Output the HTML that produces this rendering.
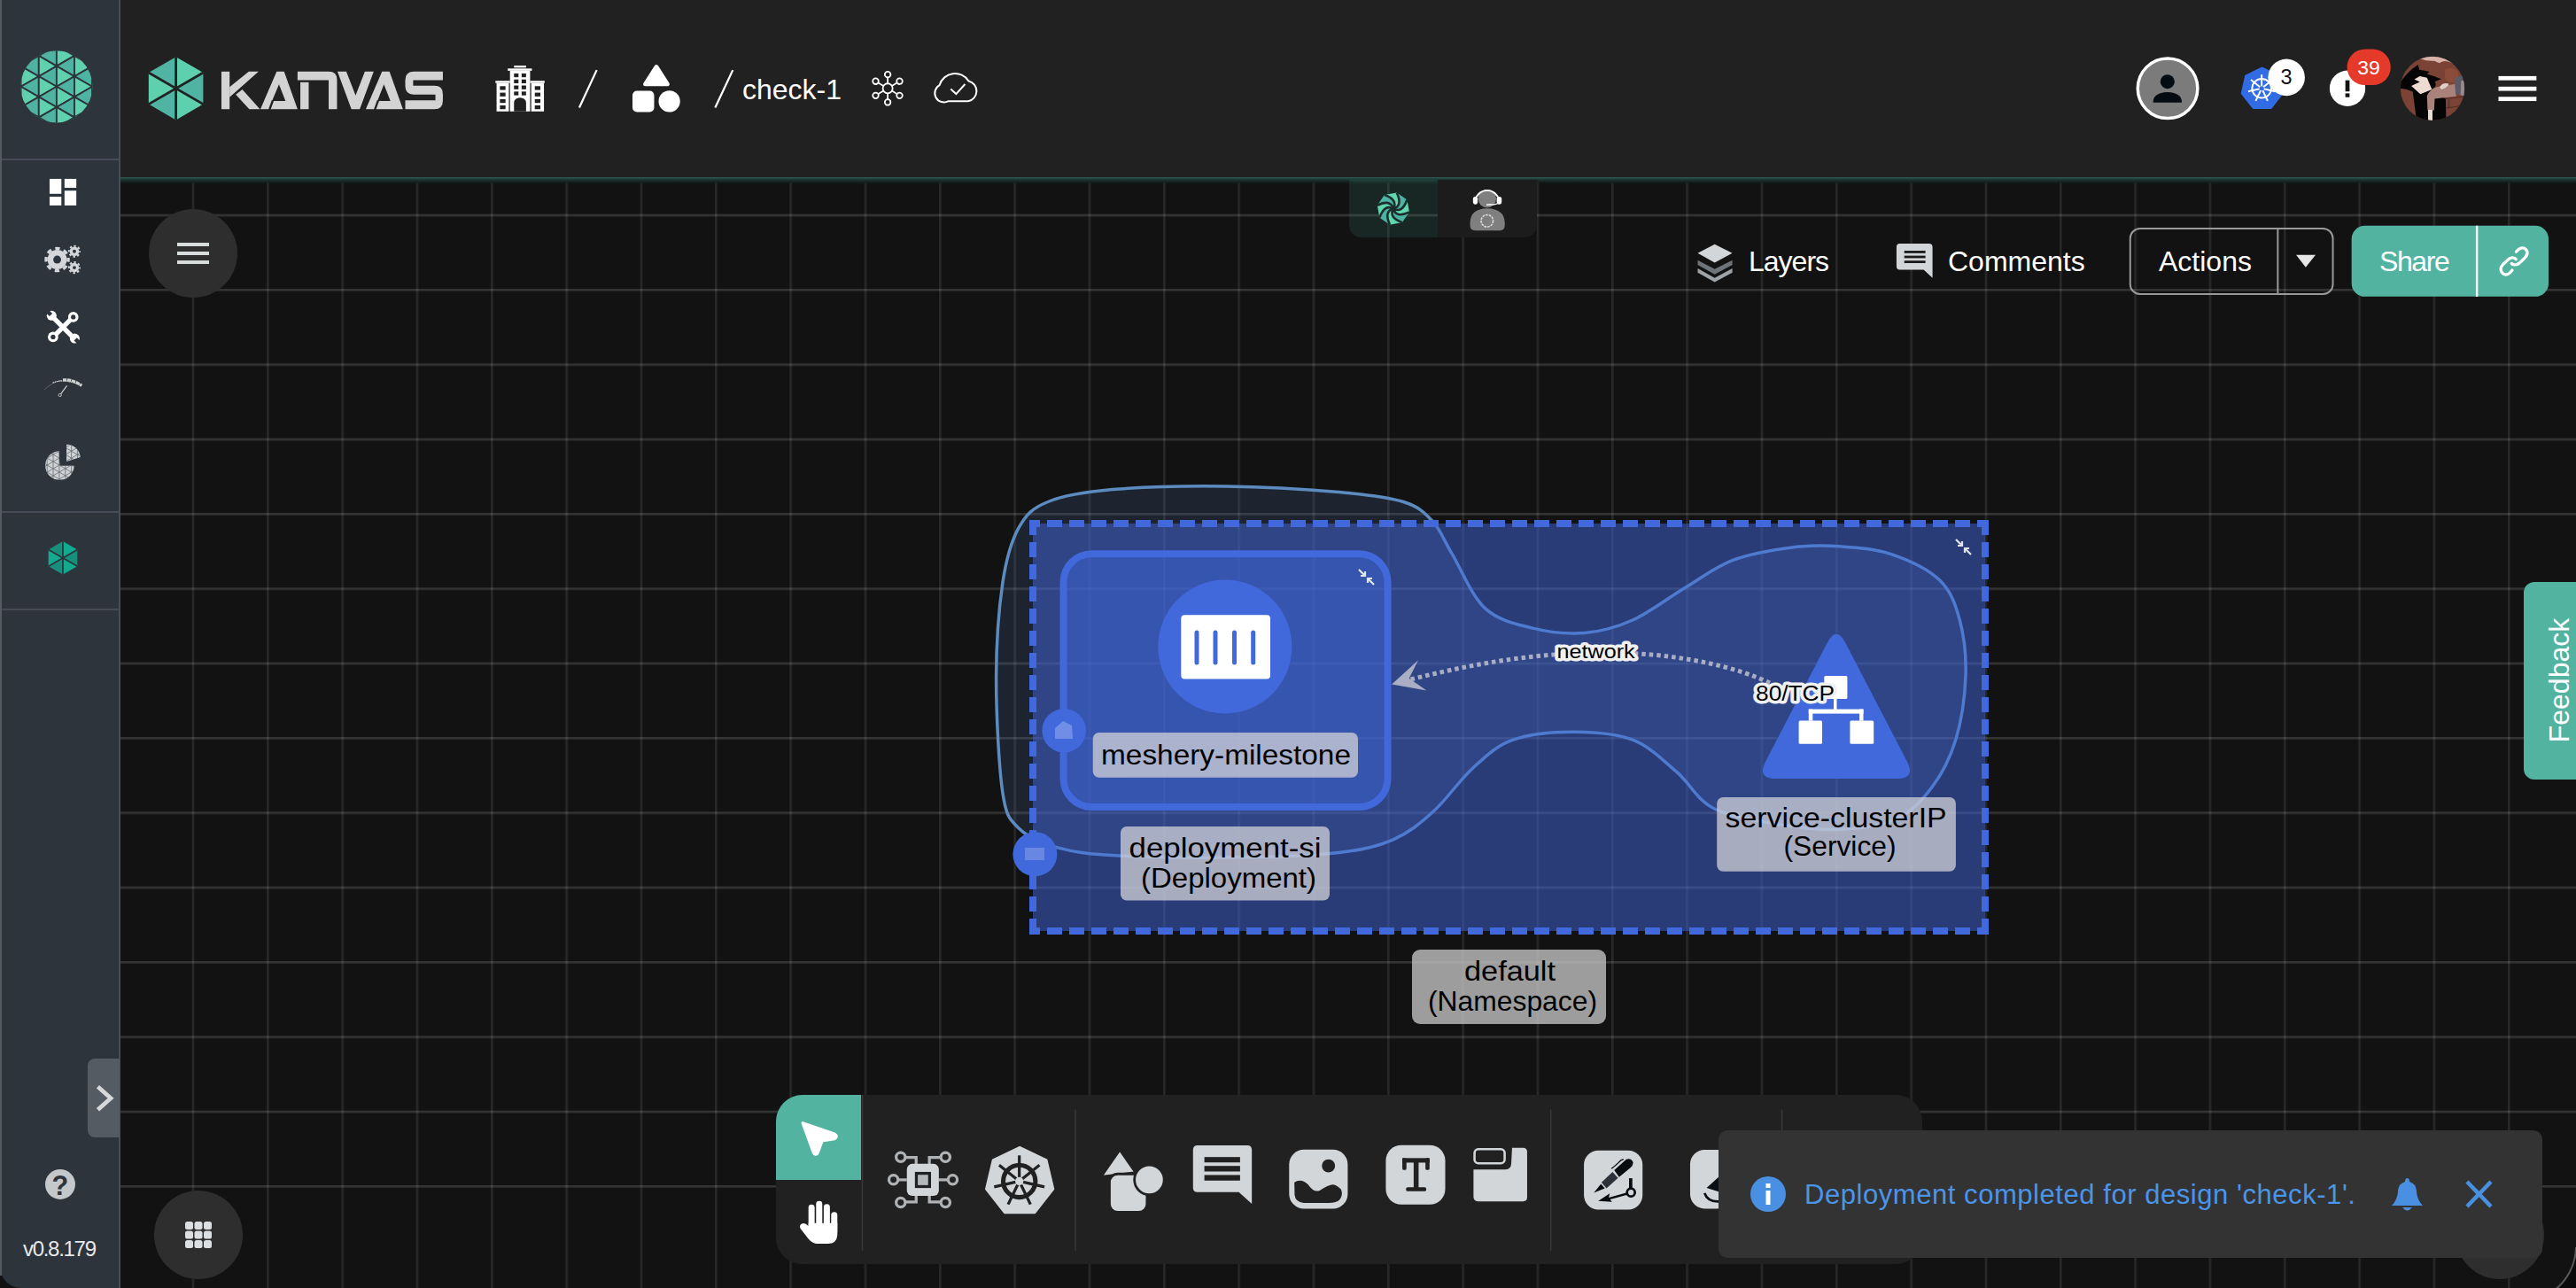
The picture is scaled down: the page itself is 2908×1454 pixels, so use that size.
<!DOCTYPE html>
<html><head><meta charset="utf-8">
<style>
html,body{margin:0;padding:0;}
body{width:2908px;height:1454px;overflow:hidden;background:#121212;position:relative;font-family:"Liberation Sans",sans-serif;}
.abs{position:absolute;}
svg{position:absolute;overflow:visible;}
.txt{position:absolute;white-space:nowrap;line-height:1;}
</style></head><body>
<!-- grid -->
<svg style="left:0;top:0" width="2908" height="1454" viewBox="0 0 2908 1454">
  <defs>
    <pattern id="gpv" patternUnits="userSpaceOnUse" x="216.7" y="0" width="84.33" height="1454">
      <rect x="0" y="0" width="2.6" height="1454" fill="rgba(255,255,255,0.095)"/>
    </pattern>
    <pattern id="gph" patternUnits="userSpaceOnUse" x="0" y="241.7" width="2908" height="84.33">
      <rect x="0" y="0" width="2908" height="2.6" fill="rgba(255,255,255,0.14)"/>
    </pattern>
  </defs>
  <rect x="135" y="200" width="2773" height="1254" fill="url(#gpv)"/>
  <rect x="135" y="200" width="2773" height="1200" fill="url(#gph)"/>
  <path d="M2908,1408 A62,62 0 0 1 2846,1470 L2908,1470 Z" fill="#0a0a0a"/>
  <path d="M2908,1408 A62,62 0 0 1 2880,1459" fill="none" stroke="#5a5a5a" stroke-width="2"/>
</svg>

<svg style="left:0;top:0" width="2908" height="1454" viewBox="0 0 2908 1454">
<path d="M1124.6,767.0 C1124.6,727.5 1127.7,686.2 1131.9,657.7 C1136.2,629.2 1141.6,610.9 1150.1,595.7 C1158.6,580.5 1165.3,573.7 1183.0,566.5 C1200.7,559.3 1222.5,555.5 1256.0,552.6 C1289.5,549.7 1341.1,548.5 1383.7,549.0 C1426.3,549.5 1478.0,552.6 1511.4,555.5 C1544.8,558.4 1566.7,561.0 1584.3,566.5 C1601.9,572.0 1608.1,578.7 1617.2,588.4 C1626.3,598.1 1629.1,608.5 1639.0,624.9 C1648.9,641.3 1661.2,672.6 1676.4,686.6 C1691.6,700.6 1711.6,704.5 1730.4,709.1 C1749.2,713.8 1770.2,716.0 1789.0,714.5 C1807.8,713.0 1824.2,708.4 1843.0,700.0 C1861.8,691.6 1882.7,675.2 1901.5,664.0 C1920.3,652.8 1935.3,640.3 1955.6,632.6 C1975.8,624.9 2002.8,620.6 2023.0,618.0 C2043.2,615.4 2058.2,615.5 2077.0,616.8 C2095.8,618.1 2116.9,619.4 2135.7,625.8 C2154.5,632.2 2176.9,642.6 2189.7,655.0 C2202.5,667.4 2207.4,682.0 2212.3,700.0 C2217.2,718.0 2219.8,740.5 2219.0,763.0 C2218.2,785.5 2214.2,814.0 2207.8,835.0 C2201.4,856.0 2192.1,874.0 2180.7,889.0 C2169.3,904.0 2157.4,917.1 2139.6,925.0 C2121.8,932.9 2097.3,935.7 2074.0,936.4 C2050.7,937.1 2023.4,933.5 1999.9,929.4 C1976.4,925.3 1950.9,921.5 1933.0,911.8 C1915.1,902.1 1907.5,884.0 1892.5,871.2 C1877.5,858.4 1862.5,842.7 1843.0,835.2 C1823.5,827.7 1798.0,826.2 1775.5,826.2 C1753.0,826.2 1726.8,828.5 1708.0,835.2 C1689.2,842.0 1678.0,853.2 1663.0,866.7 C1648.0,880.2 1632.9,902.8 1617.9,916.3 C1602.9,929.8 1590.5,940.1 1572.8,947.8 C1555.0,955.5 1539.9,959.1 1511.4,962.4 C1482.9,965.7 1443.3,967.2 1401.9,967.8 C1360.5,968.4 1297.9,967.8 1263.2,966.0 C1228.5,964.2 1212.8,962.1 1193.9,956.9 C1175.1,951.7 1160.4,945.3 1150.1,935.0 C1139.8,924.7 1136.2,922.9 1131.9,894.9 C1127.7,866.9 1124.6,806.5 1124.6,767.0Z" fill="rgba(90,123,185,0.18)" stroke="#5b8bbf" stroke-width="3.5"/>
<rect x="1166" y="591" width="1075" height="460" fill="rgba(65,105,225,0.49)"/>
<g stroke="#4169dc" stroke-width="8" fill="none">
  <line x1="1162" y1="591" x2="2245" y2="591" stroke-dasharray="17 8" stroke-dashoffset="5"/>
  <line x1="1162" y1="1051" x2="2245" y2="1051" stroke-dasharray="17 8" stroke-dashoffset="5"/>
  <line x1="1166" y1="587" x2="1166" y2="1055" stroke-dasharray="17 8" stroke-dashoffset="0"/>
  <line x1="2241" y1="587" x2="2241" y2="1055" stroke-dasharray="17 8" stroke-dashoffset="0"/>
</g>
<rect x="1200.5" y="625.2" width="366" height="285.8" rx="32" fill="rgba(65,105,225,0.45)" stroke="#4169dc" stroke-width="8"/>
<circle cx="1382.9" cy="730" r="75.5" fill="#4169dc"/>
<rect x="1333.3" y="694.2" width="100.7" height="72.2" rx="4" fill="#fff"/>
<g stroke="#4169dc" stroke-width="5" stroke-linecap="round">
  <line x1="1351" y1="714" x2="1351" y2="748"/><line x1="1372" y1="714" x2="1372" y2="748"/>
  <line x1="1393.5" y1="714" x2="1393.5" y2="748"/><line x1="1414.7" y1="714" x2="1414.7" y2="748"/>
</g>
<g stroke="#fff" stroke-width="2.2" fill="none" opacity="0.85">
  <path d="M1534,643 L1541,650 M1536,650 H1541 V645"/>
  <path d="M1551,660 L1544,653 M1549,653 H1544 V658"/>
  <path d="M2208,609 L2215,616 M2210,616 H2215 V611"/>
  <path d="M2225,626 L2218,619 M2223,619 H2218 V624"/>
</g>
<circle cx="1201.2" cy="824.8" r="24.8" fill="#4169dc"/>
<path d="M1191,834 V822 L1200,814 L1210,819 L1211,834 Z" fill="rgba(255,255,255,0.25)"/>
<circle cx="1168.4" cy="964.2" r="25" fill="#4169dc"/>
<rect x="1157" y="957" width="22" height="14" fill="rgba(255,255,255,0.2)"/>
<path d="M2083.2,725.5 Q2073.0,706.0 2062.8,725.5 L1993.2,859.5 Q1983.0,879.0 2005.0,879.0 L2141.0,879.0 Q2163.0,879.0 2152.8,859.5 Z" fill="#4169dc"/>
<g fill="#fff">
  <rect x="2059.3" y="762.9" width="26.1" height="26.1" rx="1.5"/>
  <rect x="2030.6" y="813.4" width="26.4" height="26.4" rx="1.5"/>
  <rect x="2088.4" y="813.4" width="26.8" height="26.4" rx="1.5"/>
  <rect x="2070" y="789" width="3.5" height="12"/>
  <rect x="2041.8" y="800.6" width="61.7" height="5"/>
  <rect x="2041.8" y="800.6" width="4.5" height="13"/>
  <rect x="2099" y="800.6" width="4.5" height="13"/>
</g>
<path d="M1592.5,767 C1680,745 1760,733 1850,738 C1900,741 1960,752 2000,772" fill="none" stroke="#a9aec5" stroke-width="5" stroke-dasharray="4.5 4"/>
<polygon points="1571.1,772.6 1601,745.3 1590.7,765.8 1610.4,779.4" fill="#a9aec5"/>
<g fill="rgba(210,210,215,0.75)">
  <rect x="1233.7" y="827" width="299.3" height="50.8" rx="7"/>
  <rect x="1265" y="933" width="236" height="83.6" rx="7"/>
  <rect x="1938.2" y="899.9" width="269.7" height="83.8" rx="7"/>
</g>
<rect x="1594" y="1072" width="219" height="84" rx="9" fill="rgba(195,195,195,0.79)"/>
</svg>
<svg style="left:0;top:0" width="2908" height="1454" viewBox="0 0 2908 1454" font-family="Liberation Sans" fill="#000">
  <text x="1384" y="863" font-size="32" text-anchor="middle" textLength="282" lengthAdjust="spacingAndGlyphs">meshery-milestone</text>
  <text x="1383" y="968" font-size="32" text-anchor="middle" textLength="217" lengthAdjust="spacingAndGlyphs">deployment-si</text>
  <text x="1387" y="1002" font-size="32" text-anchor="middle" textLength="198" lengthAdjust="spacingAndGlyphs">(Deployment)</text>
  <text x="2072.6" y="934" font-size="32" text-anchor="middle" textLength="250" lengthAdjust="spacingAndGlyphs">service-clusterIP</text>
  <text x="2077" y="965.5" font-size="32" text-anchor="middle" textLength="127" lengthAdjust="spacingAndGlyphs">(Service)</text>
  <text x="1704.5" y="1107" font-size="32" text-anchor="middle" textLength="103" lengthAdjust="spacingAndGlyphs">default</text>
  <text x="1707.5" y="1141" font-size="32" text-anchor="middle" textLength="191" lengthAdjust="spacingAndGlyphs">(Namespace)</text>
  <g stroke="#f0f0f0" stroke-width="7" stroke-linejoin="round" paint-order="stroke">
    <text x="1801.6" y="742.7" font-size="22" text-anchor="middle" textLength="88" lengthAdjust="spacingAndGlyphs">network</text>
    <text x="2026.6" y="791.3" font-size="23" text-anchor="middle" textLength="89" lengthAdjust="spacingAndGlyphs">80/TCP</text>
  </g>
</svg>

<!-- bottom toolbar -->
<div class="abs" style="left:876px;top:1236px;width:1294px;height:191px;background:#212121;border-radius:30px;"></div>
<div class="abs" style="left:876px;top:1236px;width:96px;height:96px;background:#52b3a1;border-radius:30px 0 0 0;"></div>
<svg style="left:860px;top:1220px" width="600" height="220" viewBox="0 0 2576 944.6">
  <path d="M198,205 L352,258 Q372,268 352,282 L292,292 L272,348 Q262,368 250,348 Z" fill="#fff" stroke="#fff" stroke-width="14" stroke-linejoin="round"/>
  <g fill="#fff">
    <rect x="226" y="600" width="30" height="130" rx="15"/>
    <rect x="263" y="583" width="30" height="140" rx="15"/>
    <rect x="300" y="598" width="30" height="130" rx="15"/>
    <rect x="336" y="636" width="30" height="110" rx="15"/>
    <path d="M226,690 H366 V750 Q362,790 320,790 H270 Q245,790 225,765 L188,718 Q178,700 196,692 Q212,688 226,705 Z"/>
  </g>
  <rect x="484" y="68" width="6" height="757" fill="#3a3a3a"/>
  <rect x="1517" y="140" width="6" height="685" fill="#3a3a3a"/>
  <g fill="none" stroke="#b0b3b6" stroke-width="14">
    <circle cx="673" cy="370" r="22"/><circle cx="890" cy="370" r="22"/>
    <circle cx="638" cy="480" r="22"/><circle cx="925" cy="480" r="22"/>
    <circle cx="673" cy="590" r="22"/><circle cx="890" cy="590" r="22"/>
    <path d="M748,405 V372 H695 M812,405 V372 H868 M703,480 H660 M857,480 H903 M748,555 V588 H695 M812,555 V588 H868"/>
  </g>
  <rect x="703" y="403" width="155" height="155" rx="26" fill="#d3d6d9"/>
  <rect x="742" y="442" width="78" height="78" fill="#212121"/>
  <rect x="756" y="456" width="50" height="50" fill="#b5b8bb"/>
  <polygon points="1250,322 1380,385 1413,525 1323,640 1177,640 1087,525 1120,385" fill="#d3d6d9" stroke="#d3d6d9" stroke-width="10" stroke-linejoin="round"/>
  <g stroke="#212121" fill="none">
    <circle cx="1248" cy="487" r="78" stroke-width="22"/>
    <g stroke-width="14"><line x1="1248" y1="487" x2="1248.0" y2="362.0"/><line x1="1248" y1="487" x2="1345.7" y2="409.1"/><line x1="1248" y1="487" x2="1369.9" y2="514.8"/><line x1="1248" y1="487" x2="1302.2" y2="599.6"/><line x1="1248" y1="487" x2="1193.8" y2="599.6"/><line x1="1248" y1="487" x2="1126.1" y2="514.8"/><line x1="1248" y1="487" x2="1150.3" y2="409.1"/></g>
  </g>
  <circle cx="1248" cy="487" r="20" fill="#d3d6d9"/>
  <g fill="#d3d6d9" stroke="#212121" stroke-width="12" stroke-linejoin="round">
    <polygon points="1735,335 1812,445 1645,465"/>
    <rect x="1685" y="452" width="182" height="185" rx="40"/>
    <circle cx="1878" cy="480" r="72"/>
  </g>
  <path d="M2112,313 H2353 Q2375,313 2375,335 V597 L2312,540 H2112 Q2090,540 2090,518 V335 Q2090,313 2112,313 Z" fill="#d3d6d9"/>
  <g fill="#212121">
    <rect x="2145" y="370" width="173" height="26"/>
    <rect x="2145" y="413" width="173" height="27"/>
    <rect x="2145" y="457" width="173" height="27"/>
  </g>
</svg>
<svg style="left:1420px;top:1220px" width="600" height="220" viewBox="0 0 2576 944.6">
  <rect x="620" y="312" width="288" height="288" rx="75" fill="#d3d6d9"/>
  <g fill="#212121">
    <rect x="700" y="375" width="132" height="22"/>
    <rect x="700" y="375" width="20" height="58" rx="8"/>
    <rect x="812" y="375" width="20" height="58" rx="8"/>
    <rect x="755" y="390" width="24" height="140"/>
    <rect x="718" y="516" width="98" height="20" rx="8"/>
  </g>
  <path d="M1232,325 H1285 Q1305,325 1305,345 V565 Q1305,585 1285,585 H1067 Q1045,585 1045,563 V430 H1200 Q1228,430 1228,400 Z" fill="#d3d6d9"/>
  <rect x="1050" y="332" width="146" height="68" rx="18" fill="none" stroke="#d3d6d9" stroke-width="11"/>
  <rect x="1417" y="140" width="6" height="685" fill="#3a3a3a"/>
  <rect x="2537" y="140" width="6" height="685" fill="#3a3a3a"/>
  <rect x="2095" y="335" width="200" height="285" rx="70" fill="#d3d6d9"/>
  <path d="M2165,545 Q2180,590 2240,585" fill="none" stroke="#0a0f14" stroke-width="12"/>
  <path d="M2175,520 L2240,460 V540 Z" fill="#0a0f14"/>
</svg>
<svg style="left:1450px;top:1290px" width="80" height="80" viewBox="0 0 1288 1288">
  <rect x="85" y="125" width="1065" height="1075" rx="270" fill="#d3d6d9"/>
  <circle cx="800" cy="420" r="120" fill="#212121"/>
  <path d="M180,720 Q300,640 430,760 Q530,910 640,870 Q800,760 880,760 Q960,770 1030,850 Q1070,950 1000,1040 Q950,1095 800,1095 H350 Q200,1080 185,950 Z" fill="#212121"/>
</svg>
<svg style="left:1780px;top:1290px" width="80" height="80" viewBox="0 0 1288 1288">
  <rect x="130" y="140" width="1065" height="1075" rx="260" fill="#d3d6d9"/>
  <path d="M310,910 L440,750 L510,830 Z" fill="#060b10"/>
  <path d="M450,720 L650,530 L750,640 L540,830 Z" fill="#2b3138"/>
  <path d="M680,500 L900,300 Q990,270 1025,360 Q1020,420 980,450 L770,625 Z" fill="#060b10"/>
  <path d="M630,470 Q700,420 760,360 Q800,310 850,300" fill="none" stroke="#060b10" stroke-width="22"/>
  <rect x="950" y="645" width="60" height="190" fill="#060b10"/>
  <circle cx="985" cy="905" r="72" fill="none" stroke="#060b10" stroke-width="44"/>
  <path d="M915,925 L570,1020" stroke="#060b10" stroke-width="40"/>
  <path d="M390,1060 L600,920 L580,1000 L640,1075 Z" fill="#060b10"/>
</svg>
<!-- bottom-right round button -->
<div class="abs" style="left:2772px;top:1344px;width:100px;height:100px;border-radius:50%;background:#2e2e2e;"></div>
<!-- toast -->
<div class="abs" style="left:1940px;top:1276px;width:930px;height:144px;background:#333333;border-radius:10px;"></div>
<svg style="left:1940px;top:1276px" width="968" height="178" viewBox="0 0 968 178">
  <circle cx="56" cy="72" r="20" fill="#4a90e2"/>
  <rect x="53.5" y="68" width="5" height="16" fill="#fff"/>
  <rect x="53.5" y="60" width="5" height="5" fill="#fff"/>
  <path d="M760,85 H795 Q789,79 788,70 V68 Q787,60 780,58 Q780,54 777.5,54 Q775,54 775,58 Q768,60 767,68 V70 Q766,79 760,85 Z" fill="#4a90e2"/>
  <path d="M772,87 Q777.5,94 783,87 Z" fill="#4a90e2"/>
  <g stroke="#4a90e2" stroke-width="4.5">
    <line x1="845" y1="58" x2="872" y2="86"/>
    <line x1="872" y1="58" x2="845" y2="86"/>
  </g>
</svg>
<div class="txt" style="left:2037px;top:1333px;font-size:31px;color:#4b95e8;letter-spacing:0.55px;">Deployment completed for design 'check-1'.</div>

<!-- header -->
<div class="abs" style="left:135px;top:0;width:2773px;height:200px;background:#212121;"></div>
<div class="abs" style="left:136px;top:200px;width:2772px;height:8px;background:linear-gradient(#2d5c53 0%,#1f3a35 30%,#14201e 65%,rgba(18,18,18,0) 100%);"></div>

<!-- kanvas hexagon -->
<svg style="left:0;top:0" width="300" height="200" viewBox="0 0 300 200"><polygon points="198.6,99.8 198.6,64.2 229.4,82.0" fill="#5fd0ad"/><polygon points="198.6,99.8 229.4,82.0 229.4,117.6" fill="#4fb5a2"/><polygon points="198.6,99.8 229.4,117.6 198.6,135.4" fill="#5fd0ad"/><polygon points="198.6,99.8 198.6,135.4 167.8,117.6" fill="#4fb5a2"/><polygon points="198.6,99.8 167.8,117.6 167.8,82.0" fill="#5fd0ad"/><polygon points="198.6,99.8 167.8,82.0 198.6,64.2" fill="#4fb5a2"/><g stroke="#212121" stroke-width="2.8"><line x1="198.6" y1="64.2" x2="198.6" y2="135.4"/><line x1="229.4" y1="82.0" x2="167.8" y2="117.6"/><line x1="229.4" y1="117.6" x2="167.8" y2="82.0"/></g></svg>
<!-- KANVAS letters -->
<svg style="left:240px;top:70px" width="270" height="65" viewBox="0 0 2576 620">
  <g fill="#d3d3d3">
    <rect x="95" y="103" width="88" height="405"/>
    <polygon points="183,270 390,103 495,103 183,380"/>
    <polygon points="250,350 320,295 510,508 395,508"/>
    <polygon points="515,508 690,103 770,103 915,508"/>
    <path d="M915,103 H1250 Q1340,103 1340,190 V508 H1250 V195 H915 Z"/>
    <rect x="945" y="218" width="90" height="290"/>
    <polygon points="1345,103 1440,103 1540,360 1640,103 1735,103 1585,508 1495,508"/>
    <polygon points="1650,508 1825,103 1905,103 2050,508"/>
    <path d="M2170,103 H2480 V195 H2160 V255 H2390 Q2480,255 2480,345 V415 Q2480,508 2390,508 H2075 V413 H2400 V350 H2165 Q2075,350 2075,260 V195 Q2075,103 2170,103 Z"/>
  </g>
  <g fill="#212121">
    <polygon points="715,240 785,420 640,420"/>
    <polygon points="1845,240 1915,420 1775,420"/>
  </g>
  <g stroke="#212121" stroke-width="22">
    <line x1="648" y1="415" x2="612" y2="515"/>
    <line x1="1783" y1="415" x2="1747" y2="515"/>
  </g>
</svg>
<!-- breadcrumb icons -->
<svg style="left:500px;top:40px" width="650" height="120" viewBox="0 0 2576 475.6">
  <g fill="#fff">
    <rect x="318" y="135" width="54" height="9"/>
    <rect x="290" y="148" width="108" height="10"/>
    <rect x="300" y="158" width="90" height="182"/>
    <rect x="235" y="203" width="65" height="10"/>
    <rect x="240" y="213" width="55" height="127"/>
    <rect x="390" y="203" width="65" height="10"/>
    <rect x="395" y="213" width="57" height="127"/>
  </g>
  <g fill="#212121">
    <rect x="318" y="170" width="20" height="17"/><rect x="352" y="170" width="20" height="17"/>
    <rect x="318" y="197" width="20" height="17"/><rect x="352" y="197" width="20" height="17"/>
    <rect x="318" y="224" width="20" height="17"/><rect x="352" y="224" width="20" height="17"/>
    <rect x="318" y="251" width="20" height="17"/><rect x="352" y="251" width="20" height="17"/>
    <path d="M318,340 V300 A27,22 0 0 1 372,300 V340 Z"/>
    <rect x="255" y="227" width="25" height="17"/><rect x="255" y="256" width="25" height="17"/>
    <rect x="255" y="285" width="25" height="17"/><rect x="255" y="313" width="25" height="17"/>
    <rect x="411" y="227" width="25" height="17"/><rect x="411" y="256" width="25" height="17"/>
    <rect x="411" y="285" width="25" height="17"/><rect x="411" y="313" width="25" height="17"/>
  </g>
  <g stroke="#fff" stroke-width="9">
    <line x1="610" y1="323" x2="688" y2="155"/>
    <line x1="1218" y1="323" x2="1297" y2="155"/>
  </g>
  <g fill="#fff">
    <polygon points="955,140 1005,218 905,218" stroke="#fff" stroke-width="18" stroke-linejoin="round"/>
    <rect x="848" y="248" width="97" height="95" rx="20"/>
    <circle cx="1013" cy="295" r="48"/>
  </g>
  <g stroke="#fff" stroke-width="7" fill="none">
    <circle cx="1990" cy="237" r="22"/>
    <circle cx="1990" cy="175" r="13"/>
    <circle cx="1990" cy="299" r="13"/>
    <circle cx="2043" cy="205" r="13"/>
    <circle cx="2043" cy="269" r="13"/>
    <circle cx="1936" cy="205" r="13"/>
    <circle cx="1936" cy="269" r="13"/>
    <line x1="1990" y1="188" x2="1990" y2="215"/>
    <line x1="1990" y1="259" x2="1990" y2="286"/>
    <line x1="2031" y1="212" x2="2009" y2="226"/>
    <line x1="2031" y1="262" x2="2009" y2="248"/>
    <line x1="1948" y1="212" x2="1971" y2="226"/>
    <line x1="1948" y1="262" x2="1971" y2="248"/>
    <path d="M2262,294 H2350 A46,46 0 0 0 2352,204 A72,72 0 0 0 2222,222 A38,38 0 0 0 2262,294 Z" stroke-width="8"/>
    <path d="M2272,240 L2296,262 L2336,218" stroke-width="8"/>
  </g>
</svg>
<svg style="left:2705px;top:60px" width="85" height="80" viewBox="0 0 1369 1288">
  <defs><clipPath id="avc"><circle cx="660" cy="643" r="582"/></clipPath></defs>
  <g clip-path="url(#avc)">
    <rect x="0" y="0" width="1369" height="1288" fill="#7a4335"/>
    <path d="M880,300 Q1000,230 1120,330 Q1150,450 1080,520 Q950,560 890,450 Z" fill="#8c4c3c"/>
    <path d="M440,60 H1250 V420 Q1180,300 1100,230 Q1000,150 850,170 Q780,200 700,140 Q560,150 440,100 Z" fill="#d9b3aa"/>
    <path d="M800,170 Q880,120 1000,170 Q1060,200 1020,215 Q900,200 820,215 Z" fill="#7a4335"/>
    <path d="M60,560 Q200,330 400,210 L420,300 Q520,310 610,340 L560,380 Q700,420 820,470 L700,520 Q760,600 640,660 Q700,750 900,830 L910,1300 H380 Q330,900 300,700 Q180,640 60,640 Z" fill="#060505"/>
    <path d="M330,475 L430,420 L560,445 L650,660 L440,745 L275,595 L430,525 Z" fill="#ecdcd2"/>
    <path d="M560,770 Q620,640 760,610 L1080,560 L1090,790 Q900,800 700,830 L690,1040 H570 Z" fill="#a9837b"/>
    <path d="M790,620 Q850,520 960,560 Q920,640 820,660 Z" fill="#e0d0c8"/>
    <rect x="580" y="1030" width="80" height="220" fill="#ecdcd2"/>
    <path d="M1060,480 Q1120,400 1230,420 L1250,780 Q1150,760 1080,740 Z" fill="#595a66"/>
    <path d="M1180,500 L1250,500 L1250,780 L1170,760 Z" fill="#9a8a90"/>
    <g stroke="#4a2a22" stroke-width="14" fill="none">
      <path d="M900,830 Q1050,800 1240,790"/>
      <path d="M960,840 V1000"/>
      <path d="M900,1000 Q1050,980 1220,950"/>
    </g>
  </g>
</svg>
<div class="txt" style="left:838px;top:85px;font-size:32px;color:#fff;">check-1</div>
<!-- right header -->
<svg style="left:2350px;top:30px" width="558" height="150" viewBox="0 0 2576 692.4">
  <circle cx="448" cy="322" r="156" fill="#7b7b7b" stroke="#fff" stroke-width="16"/>
  <circle cx="447" cy="287" r="37" fill="#040c12"/>
  <path d="M372,396 Q372,345 447,342 Q522,345 522,396 Z" fill="#040c12"/>
  <polygon points="940,218 1023,258 1043,348 986,422 895,422 837,348 857,258" fill="#326ce5" stroke="#326ce5" stroke-width="14" stroke-linejoin="round"/>
  <g stroke="#fff" stroke-width="9" fill="none">
    <circle cx="938" cy="322" r="50"/><line x1="938" y1="322" x2="938.0" y2="250.0"/><line x1="938" y1="322" x2="994.3" y2="277.1"/><line x1="938" y1="322" x2="1008.2" y2="338.0"/><line x1="938" y1="322" x2="969.2" y2="386.9"/><line x1="938" y1="322" x2="906.8" y2="386.9"/><line x1="938" y1="322" x2="867.8" y2="338.0"/><line x1="938" y1="322" x2="881.7" y2="277.1"/></g>
  <circle cx="938" cy="322" r="12" fill="#326ce5"/>
  <circle cx="1067" cy="265" r="96" fill="#fff"/>
  <text x="1067" y="302" font-family="Liberation Sans" font-size="108" text-anchor="middle" fill="#111">3</text>
  <circle cx="1385" cy="322" r="93" fill="#fff"/>
  <rect x="1374" y="280" width="22" height="58" fill="#111"/>
  <rect x="1374" y="348" width="22" height="20" fill="#111"/>
  <rect x="1383" y="118" width="227" height="187" rx="93" fill="#e5392a"/>
  <text x="1496" y="250" font-family="Liberation Sans" font-size="106" text-anchor="middle" fill="#fff">39</text>
  <g fill="#fff">
    <rect x="2172" y="258" width="198" height="22"/>
    <rect x="2172" y="313" width="198" height="22"/>
    <rect x="2172" y="366" width="198" height="22"/>
  </g>
</svg>

<!-- menu round button -->
<div class="abs" style="left:168px;top:236px;width:100px;height:100px;border-radius:50%;background:#2e2e2e;"></div>
<div class="abs" style="left:200px;top:274px;width:36px;height:3.5px;background:#d8dcdc;"></div>
<div class="abs" style="left:200px;top:284px;width:36px;height:3.5px;background:#d8dcdc;"></div>
<div class="abs" style="left:200px;top:294px;width:36px;height:3.5px;background:#d8dcdc;"></div>
<!-- apps round button -->
<div class="abs" style="left:174px;top:1344px;width:100px;height:100px;border-radius:50%;background:#2e2e2e;"></div>
<svg style="left:209px;top:1379px" width="30" height="30" viewBox="0 0 30 30">
  <g fill="#dcdfe1">
    <rect x="0" y="0" width="9" height="9" rx="2.5"/><rect x="10.5" y="0" width="9" height="9" rx="2.5"/><rect x="21" y="0" width="9" height="9" rx="2.5"/>
    <rect x="0" y="10.5" width="9" height="9" rx="2.5"/><rect x="10.5" y="10.5" width="9" height="9" rx="2.5"/><rect x="21" y="10.5" width="9" height="9" rx="2.5"/>
    <rect x="0" y="21" width="9" height="9" rx="2.5"/><rect x="10.5" y="21" width="9" height="9" rx="2.5"/><rect x="21" y="21" width="9" height="9" rx="2.5"/>
  </g>
</svg>
<!-- top pill -->
<div class="abs" style="left:1523px;top:203px;width:212px;height:65px;border-radius:0 0 14px 14px;overflow:hidden;">
  <div class="abs" style="left:0;top:0;width:100px;height:65px;background:rgba(60,150,130,0.17);"></div>
  <div class="abs" style="left:100px;top:0;width:112px;height:65px;background:#1c1c1c;"></div>
</div>
<svg style="left:1480px;top:180px" width="300" height="120" viewBox="0 0 2576 1030">
  <path d="M1542,610 Q1545,480 1708,475 Q1872,480 1878,610 V640 Q1878,688 1830,688 H1590 Q1542,688 1542,640 Z" fill="#7f7f7f"/>
  <circle cx="1707" cy="380" r="88" fill="#7f7f7f"/>
  <path d="M1592,400 A116,116 0 0 1 1822,400" fill="none" stroke="#fff" stroke-width="16"/>
  <rect x="1570" y="360" width="45" height="75" rx="22" fill="#fff"/>
  <rect x="1800" y="360" width="48" height="75" rx="22" fill="#fff"/>
  <path d="M1700,440 L1780,435 Q1810,430 1815,415" fill="none" stroke="#fff" stroke-width="12"/>
  <circle cx="1707" cy="595" r="58" fill="none" stroke="#d8d8d8" stroke-width="14" stroke-dasharray="24 8"/>
</svg>
<svg style="left:0;top:0" width="2908" height="400" viewBox="0 0 2908 400"><path d="M1562.82,220.08 L1576.75,217.50 Q1583.93,232.44 1572.90,235.60 Q1578.46,225.57 1562.82,220.08 Z" fill="#5fd6ad"/><path d="M1576.75,217.50 L1588.42,225.52 Q1582.93,241.16 1572.90,235.60 Q1583.93,232.44 1576.75,217.50 Z" fill="#4db3a0"/><path d="M1588.42,225.52 L1591.00,239.45 Q1576.06,246.63 1572.90,235.60 Q1582.93,241.16 1588.42,225.52 Z" fill="#5fd6ad"/><path d="M1591.00,239.45 L1582.98,251.12 Q1567.34,245.63 1572.90,235.60 Q1576.06,246.63 1591.00,239.45 Z" fill="#4db3a0"/><path d="M1582.98,251.12 L1569.05,253.70 Q1561.87,238.76 1572.90,235.60 Q1567.34,245.63 1582.98,251.12 Z" fill="#5fd6ad"/><path d="M1569.05,253.70 L1557.38,245.68 Q1562.87,230.04 1572.90,235.60 Q1561.87,238.76 1569.05,253.70 Z" fill="#4db3a0"/><path d="M1557.38,245.68 L1554.80,231.75 Q1569.74,224.57 1572.90,235.60 Q1562.87,230.04 1557.38,245.68 Z" fill="#5fd6ad"/><path d="M1554.80,231.75 L1562.82,220.08 Q1578.46,225.57 1572.90,235.60 Q1569.74,224.57 1554.80,231.75 Z" fill="#4db3a0"/><path d="M1562.82,220.08 Q1578.46,225.57 1572.90,235.60" fill="none" stroke="#1d2e2c" stroke-width="2.6"/><path d="M1576.75,217.50 Q1583.93,232.44 1572.90,235.60" fill="none" stroke="#1d2e2c" stroke-width="2.6"/><path d="M1588.42,225.52 Q1582.93,241.16 1572.90,235.60" fill="none" stroke="#1d2e2c" stroke-width="2.6"/><path d="M1591.00,239.45 Q1576.06,246.63 1572.90,235.60" fill="none" stroke="#1d2e2c" stroke-width="2.6"/><path d="M1582.98,251.12 Q1567.34,245.63 1572.90,235.60" fill="none" stroke="#1d2e2c" stroke-width="2.6"/><path d="M1569.05,253.70 Q1561.87,238.76 1572.90,235.60" fill="none" stroke="#1d2e2c" stroke-width="2.6"/><path d="M1557.38,245.68 Q1562.87,230.04 1572.90,235.60" fill="none" stroke="#1d2e2c" stroke-width="2.6"/><path d="M1554.80,231.75 Q1569.74,224.57 1572.90,235.60" fill="none" stroke="#1d2e2c" stroke-width="2.6"/></svg>
<!-- layers/comments/actions/share -->
<svg style="left:1880px;top:240px" width="1028" height="110" viewBox="0 0 2576 276">
  <path d="M90,158 L138,185 L188,158 L188,170 L138,197 L90,170 Z" fill="#9ea3a8"/>
  <path d="M90,135 L138,160 L188,135 L188,148 L138,175 L90,148 Z" fill="#6f7479"/>
  <path d="M90,115 L138,90 L188,115 L138,142 Z" fill="#d3d6d9"/>
  <path d="M662,88 H745 Q755,88 755,98 V185 L730,162 H662 Q653,162 653,152 V98 Q653,88 662,88 Z" fill="#d3d6d9"/>
  <g fill="#1a1a1a"><rect x="675" y="108" width="60" height="7"/><rect x="675" y="122" width="60" height="7"/><rect x="675" y="136" width="60" height="7"/></g>
  <rect x="1315" y="45" width="574" height="186" rx="28" fill="none" stroke="#9a9a9a" stroke-width="5"/>
  <line x1="1733" y1="45" x2="1733" y2="231" stroke="#9a9a9a" stroke-width="5"/>
  <polygon points="1785,120 1840,120 1812,155" fill="#e6e6e6"/>
  <rect x="1942" y="37" width="558" height="201" rx="38" fill="#52b3a1"/>
  <line x1="2297" y1="37" x2="2297" y2="238" stroke="#fff" stroke-width="6"/>
</svg>
<svg style="left:2800px;top:260px" width="80" height="70" viewBox="0 0 1472 1288">
  <g fill="none" stroke="#fff" stroke-width="62" stroke-linecap="round">
    <path d="M745,445 C800,380 880,330 950,400 C1010,470 960,540 900,600 L800,690 C740,730 680,720 650,690"/>
    <path d="M740,600 C700,560 640,560 590,600 L470,710 C410,770 410,850 470,900 C540,950 610,900 660,830"/>
  </g>
</svg>
<div class="txt" style="left:1974px;top:279px;font-size:32px;color:#fff;letter-spacing:-1px;">Layers</div>
<div class="txt" style="left:2199px;top:279px;font-size:32px;color:#fff;">Comments</div>
<div class="txt" style="left:2437px;top:279px;font-size:32px;color:#fff;">Actions</div>
<div class="txt" style="left:2686px;top:279px;font-size:32px;color:#fff;letter-spacing:-1.4px;">Share</div>
<!-- feedback tab -->
<div class="abs" style="left:2849px;top:657px;width:70px;height:223px;background:#52b3a1;border-radius:12px 0 0 12px;"></div>
<div class="txt" style="left:2774px;top:752px;width:230px;text-align:center;font-size:32px;color:#fff;transform:rotate(-90deg);transform-origin:115px 16px;">Feedback</div>

<!-- sidebar -->
<div class="abs" style="left:0;top:0;width:135px;height:1454px;background:#2d343b;border-bottom-left-radius:24px;"></div>
<div class="abs" style="left:0;top:0;width:2px;height:1440px;background:#545c60;"></div>
<div class="abs" style="left:134px;top:0;width:2px;height:1454px;background:#474d55;"></div>
<div class="abs" style="left:2px;top:179px;width:132px;height:2px;background:#474b57;"></div>
<div class="abs" style="left:2px;top:577px;width:132px;height:2px;background:#474b57;"></div>
<div class="abs" style="left:2px;top:687px;width:132px;height:2px;background:#474b57;"></div>
<svg style="left:0;top:0" width="135" height="200" viewBox="0 0 135 200">
<defs><clipPath id="lc"><circle cx="63.85" cy="97.8" r="40.6"/></clipPath></defs>
<g clip-path="url(#lc)" stroke="#2d343b" stroke-width="1.9">
<polygon points="23.6,74.6 23.6,97.8 3.5,86.2" fill="#4fb3a1"/>
<polygon points="3.5,86.2 3.5,109.4 23.6,97.8" fill="#5fd1ae"/>
<polygon points="23.6,97.8 23.6,121.0 3.5,109.4" fill="#4fb3a1"/>
<polygon points="43.8,39.8 43.8,63.0 23.6,51.4" fill="#4fb3a1"/>
<polygon points="23.6,51.4 23.6,74.6 43.8,63.0" fill="#5fd1ae"/>
<polygon points="43.8,63.0 43.8,86.2 23.6,74.6" fill="#4fb3a1"/>
<polygon points="23.6,74.6 23.6,97.8 43.8,86.2" fill="#5fd1ae"/>
<polygon points="43.8,86.2 43.8,109.4 23.6,97.8" fill="#4fb3a1"/>
<polygon points="23.6,97.8 23.6,121.0 43.8,109.4" fill="#5fd1ae"/>
<polygon points="43.8,109.4 43.8,132.6 23.6,121.0" fill="#4fb3a1"/>
<polygon points="23.6,121.0 23.6,144.2 43.8,132.6" fill="#5fd1ae"/>
<polygon points="43.8,132.6 43.8,155.8 23.6,144.2" fill="#4fb3a1"/>
<polygon points="43.8,39.8 43.8,63.0 63.9,51.4" fill="#5fd1ae"/>
<polygon points="63.9,51.4 63.9,74.6 43.8,63.0" fill="#4fb3a1"/>
<polygon points="43.8,63.0 43.8,86.2 63.9,74.6" fill="#5fd1ae"/>
<polygon points="63.9,74.6 63.9,97.8 43.8,86.2" fill="#4fb3a1"/>
<polygon points="43.8,86.2 43.8,109.4 63.9,97.8" fill="#5fd1ae"/>
<polygon points="63.9,97.8 63.9,121.0 43.8,109.4" fill="#4fb3a1"/>
<polygon points="43.8,109.4 43.8,132.6 63.9,121.0" fill="#5fd1ae"/>
<polygon points="63.9,121.0 63.9,144.2 43.8,132.6" fill="#4fb3a1"/>
<polygon points="43.8,132.6 43.8,155.8 63.9,144.2" fill="#5fd1ae"/>
<polygon points="84.0,39.8 84.0,63.0 63.9,51.4" fill="#4fb3a1"/>
<polygon points="63.9,51.4 63.9,74.6 84.0,63.0" fill="#5fd1ae"/>
<polygon points="84.0,63.0 84.0,86.2 63.9,74.6" fill="#4fb3a1"/>
<polygon points="63.9,74.6 63.9,97.8 84.0,86.2" fill="#5fd1ae"/>
<polygon points="84.0,86.2 84.0,109.4 63.9,97.8" fill="#4fb3a1"/>
<polygon points="63.9,97.8 63.9,121.0 84.0,109.4" fill="#5fd1ae"/>
<polygon points="84.0,109.4 84.0,132.6 63.9,121.0" fill="#4fb3a1"/>
<polygon points="63.9,121.0 63.9,144.2 84.0,132.6" fill="#5fd1ae"/>
<polygon points="84.0,132.6 84.0,155.8 63.9,144.2" fill="#4fb3a1"/>
<polygon points="84.0,39.8 84.0,63.0 104.1,51.4" fill="#5fd1ae"/>
<polygon points="104.1,51.4 104.1,74.6 84.0,63.0" fill="#4fb3a1"/>
<polygon points="84.0,63.0 84.0,86.2 104.1,74.6" fill="#5fd1ae"/>
<polygon points="104.1,74.6 104.1,97.8 84.0,86.2" fill="#4fb3a1"/>
<polygon points="84.0,86.2 84.0,109.4 104.1,97.8" fill="#5fd1ae"/>
<polygon points="104.1,97.8 104.1,121.0 84.0,109.4" fill="#4fb3a1"/>
<polygon points="84.0,109.4 84.0,132.6 104.1,121.0" fill="#5fd1ae"/>
<polygon points="104.1,121.0 104.1,144.2 84.0,132.6" fill="#4fb3a1"/>
<polygon points="84.0,132.6 84.0,155.8 104.1,144.2" fill="#5fd1ae"/>
<polygon points="104.1,74.6 104.1,97.8 124.2,86.2" fill="#5fd1ae"/>
<polygon points="124.2,86.2 124.2,109.4 104.1,97.8" fill="#4fb3a1"/>
<polygon points="104.1,97.8 104.1,121.0 124.2,109.4" fill="#5fd1ae"/>

</g></svg>
<!-- dashboard + gears -->
<svg style="left:40px;top:190px" width="60" height="130" viewBox="0 0 594 1287">
  <g fill="#fff">
    <rect x="158" y="118" width="132" height="167"/>
    <rect x="325" y="118" width="132" height="100"/>
    <rect x="158" y="318" width="132" height="97"/>
    <rect x="325" y="250" width="132" height="165"/>
  </g>
  <g fill="#d4d6d9">
    <circle cx="243" cy="1020" r="108"/>
    <circle cx="243" cy="1020" r="124" fill="none" stroke="#d4d6d9" stroke-width="34" stroke-dasharray="52 45.4" stroke-dashoffset="26"/>
    <circle cx="435" cy="928" r="52"/>
    <circle cx="435" cy="928" r="60" fill="none" stroke="#d4d6d9" stroke-width="20" stroke-dasharray="24 23" stroke-dashoffset="12"/>
    <circle cx="435" cy="1110" r="52"/>
    <circle cx="435" cy="1110" r="60" fill="none" stroke="#d4d6d9" stroke-width="20" stroke-dasharray="24 23" stroke-dashoffset="12"/>
  </g>
  <g fill="#2d343b">
    <circle cx="243" cy="1020" r="44"/>
    <circle cx="435" cy="928" r="19"/>
    <circle cx="435" cy="1110" r="19"/>
  </g>
</svg>
<!-- tools, gauge, pie -->
<svg style="left:40px;top:340px" width="60" height="210" viewBox="0 0 368 1288">
  <defs><clipPath id="pieclip"><path d="M163,1038 L168,1140 L268,1140 A100,100 0 1 1 163,1038 Z M215,990 A100,100 0 0 1 312,1080 L215,1110 Z"/></clipPath></defs>
  <g stroke="#fff" fill="none">
    <line x1="120" y1="110" x2="270" y2="260" stroke-width="32"/>
    <line x1="135" y1="235" x2="250" y2="120" stroke-width="32"/>
  </g>
  <g fill="#fff">
    <circle cx="262" cy="110" r="36"/>
    <circle cx="122" cy="248" r="36"/>
    <circle cx="112" cy="100" r="34"/>
    <circle cx="272" cy="258" r="34"/>
  </g>
  <g fill="#2d343b">
    <circle cx="262" cy="110" r="16"/>
    <circle cx="122" cy="248" r="16"/>
    <rect x="-14" y="-40" width="28" height="50" transform="translate(100,88) rotate(-45)"/>
    <rect x="-14" y="-10" width="28" height="50" transform="translate(284,270) rotate(-45)"/>
  </g>
  <path d="M62,612 Q120,560 180,548" fill="none" stroke="#8a8f94" stroke-width="3"/>
  <path d="M120,565 Q200,530 320,585" fill="none" stroke="#cfd2d4" stroke-width="8" stroke-dasharray="10 4"/>
  <path d="M190,545 Q260,540 320,585" fill="none" stroke="#cfd2d4" stroke-width="20" stroke-dasharray="26 5"/>
  <line x1="170" y1="650" x2="218" y2="585" stroke="#d8dadc" stroke-width="7"/>
  <circle cx="170" cy="650" r="10" fill="#2d343b" stroke="#d8dadc" stroke-width="5"/>
  <g clip-path="url(#pieclip)">
    <rect x="40" y="980" width="300" height="280" fill="#cfd2d4"/>
    <path d="M-3.0,980 V1260 M39.0,980 V1260 M81.0,980 V1260 M123.0,980 V1260 M165.0,980 V1260 M207.0,980 V1260 M249.0,980 V1260 M291.0,980 V1260 M333.0,980 V1260 M40.0,674.9 L340.0,848.1 M40.0,819.2 L340.0,646.0 M40.0,723.3 L340.0,896.6 M40.0,867.7 L340.0,694.5 M40.0,771.8 L340.0,945.1 M40.0,916.2 L340.0,743.0 M40.0,820.3 L340.0,993.5 M40.0,964.7 L340.0,791.5 M40.0,868.8 L340.0,1042.0 M40.0,1013.2 L340.0,840.0 M40.0,917.3 L340.0,1090.5 M40.0,1061.7 L340.0,888.5 M40.0,965.8 L340.0,1139.0 M40.0,1110.2 L340.0,937.0 M40.0,1014.3 L340.0,1187.5 M40.0,1158.7 L340.0,985.5 M40.0,1062.8 L340.0,1236.0 M40.0,1207.2 L340.0,1034.0 M40.0,1111.3 L340.0,1284.5 M40.0,1255.7 L340.0,1082.5 M40.0,1159.8 L340.0,1333.0 M40.0,1304.2 L340.0,1131.0 M40.0,1208.3 L340.0,1381.5 M40.0,1352.7 L340.0,1179.5 M40.0,1256.8 L340.0,1430.0 M40.0,1401.2 L340.0,1228.0 M40.0,1305.3 L340.0,1478.5 M40.0,1449.7 L340.0,1276.5 M40.0,1353.8 L340.0,1527.0 M40.0,1498.2 L340.0,1324.9 M40.0,1402.3 L340.0,1575.5 M40.0,1546.7 L340.0,1373.4 M40.0,1450.8 L340.0,1624.0 M40.0,1595.1 L340.0,1421.9" stroke="#6a6f74" stroke-width="5" fill="none"/>
  </g>
</svg>
<!-- teal hexagon -->
<svg style="left:0;top:0" width="135" height="700" viewBox="0 0 135 700"><polygon points="71.0,629.8 71.0,611.0 87.3,620.4" fill="#13ab90"/><polygon points="71.0,629.8 87.3,620.4 87.3,639.2" fill="#178f7c"/><polygon points="71.0,629.8 87.3,639.2 71.0,648.6" fill="#13ab90"/><polygon points="71.0,629.8 71.0,648.6 54.7,639.2" fill="#178f7c"/><polygon points="71.0,629.8 54.7,639.2 54.7,620.4" fill="#13ab90"/><polygon points="71.0,629.8 54.7,620.4 71.0,611.0" fill="#178f7c"/><g stroke="#2d343b" stroke-width="1.7"><line x1="71.0" y1="611.0" x2="71.0" y2="648.6"/><line x1="87.3" y1="620.4" x2="54.7" y2="639.2"/><line x1="87.3" y1="639.2" x2="54.7" y2="620.4"/></g></svg>
<!-- expand tab -->
<div class="abs" style="left:99px;top:1195px;width:36px;height:89px;background:#555b63;border-radius:8px 0 0 8px;"></div>
<svg style="left:0;top:1150px" width="320" height="304" viewBox="0 0 1356 1288">
  <polyline points="468,325 530,380 468,435" fill="none" stroke="#d6d8da" stroke-width="20"/>
  <circle cx="288" cy="792" r="72" fill="#c5c8cb"/>
  <text x="288" y="842" font-family="Liberation Sans" font-weight="bold" font-size="130" text-anchor="middle" fill="#2d343b">?</text>
</svg>
<div class="txt" style="left:26px;top:1398px;font-size:24px;color:#e8e8e8;letter-spacing:-1.3px;">v0.8.179</div>

</body></html>
